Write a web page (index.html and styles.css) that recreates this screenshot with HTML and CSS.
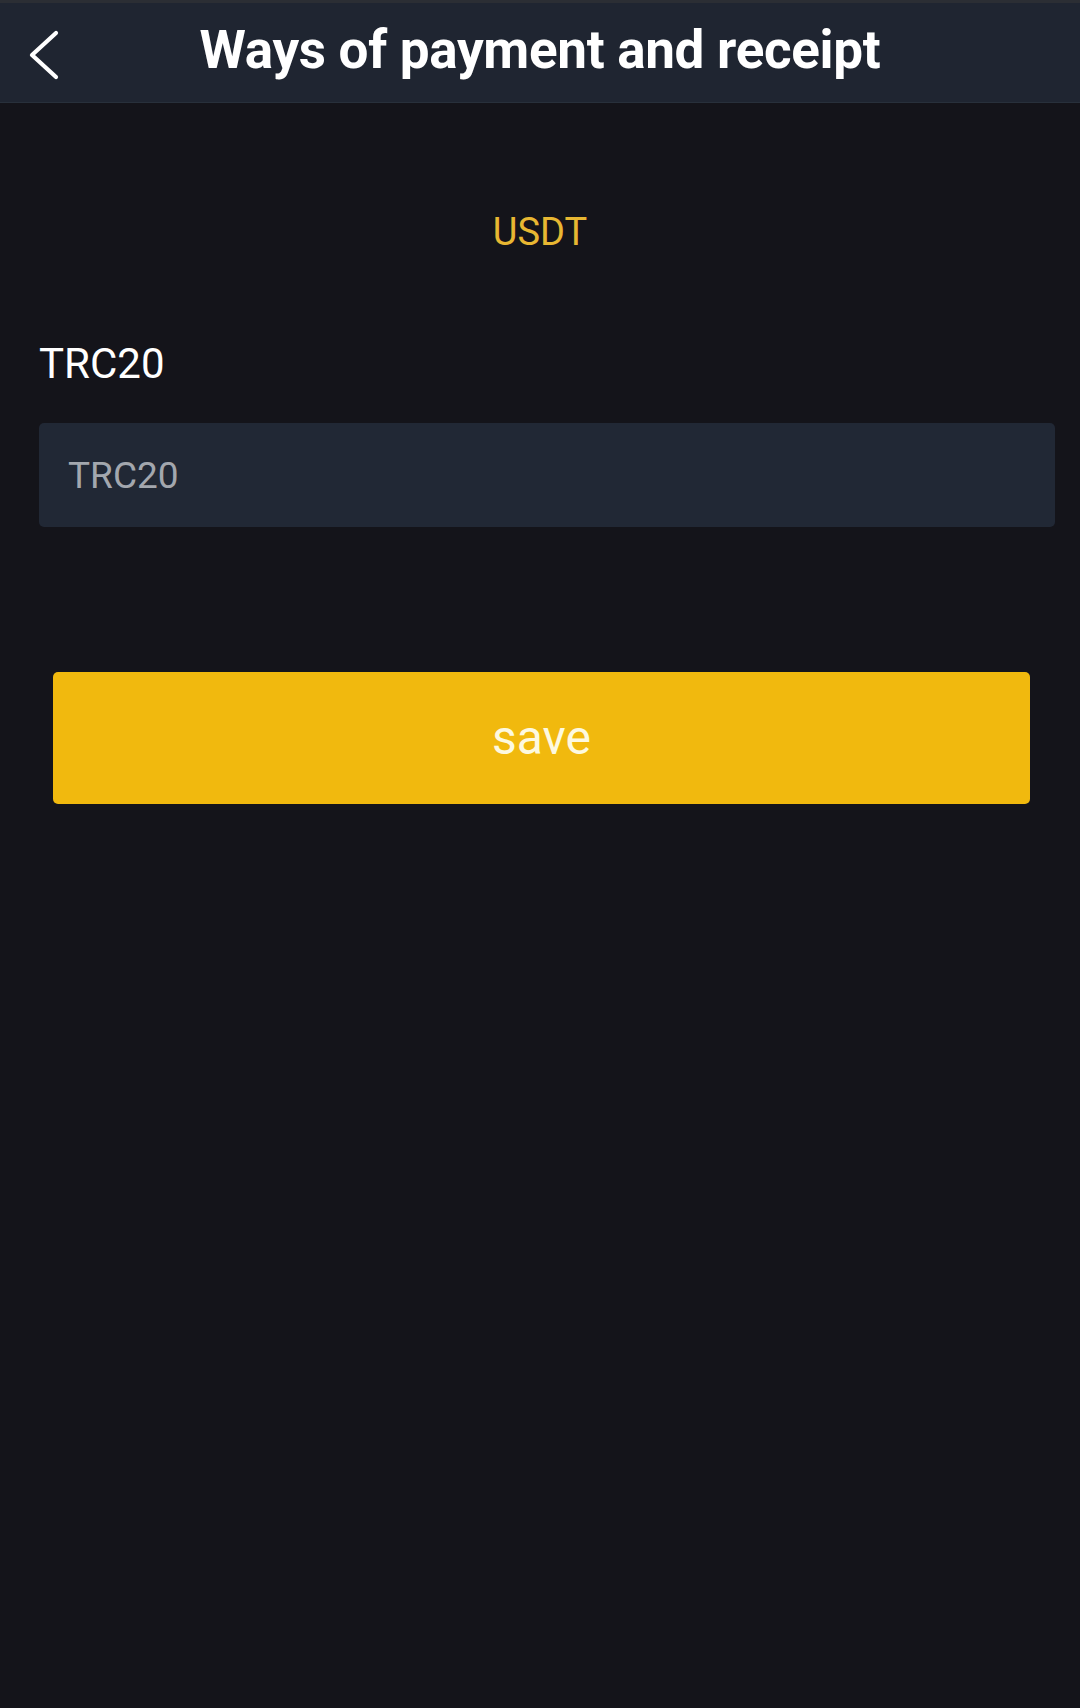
FILE: index.html
```html
<!DOCTYPE html>
<html lang="en">
<head>
<meta charset="utf-8">
<title>Ways of payment and receipt</title>
<link rel="stylesheet" href="styles.css">
</head>
<body>
<header class="topbar">
  <div class="back">
    <svg width="40" height="56" viewBox="0 0 40 56" aria-hidden="true">
      <polyline points="33,8 9,30 33,52" fill="none" stroke="#ffffff" stroke-width="4.2" stroke-linecap="round" stroke-linejoin="round"/>
    </svg>
  </div>
  <h1 class="title">Ways of payment and receipt</h1>
  <div class="spacer"></div>
</header>
<main class="content">
  <div class="coin">USDT</div>
  <div class="field-label">TRC20</div>
  <div class="field">
    <input class="field-input" type="text" placeholder="TRC20">
  </div>
  <button class="save-btn" type="button">save</button>
</main>
</body>
</html>
```

FILE: styles.css
```css
html, body {
  margin: 0;
  padding: 0;
}
body {
  background: #14141a;
  font-family: Roboto, "Noto Sans", "Liberation Sans", sans-serif;
  min-height: 1708px;
}
.topbar {
  display: grid;
  grid-template-columns: 1fr auto 1fr;
  align-items: center;
  height: 99px;
  background: #1f2531;
  border-top: 3px solid #2b2e34;
  border-bottom: 1px solid #28303b;
}
.back {
  display: flex;
  align-items: center;
  padding-left: 23px;
  height: 56px;
}
.back svg {
  display: block;
}
.title {
  margin: 0;
  color: #ffffff;
  font-size: 53px;
  font-weight: 700;
  line-height: 60px;
  letter-spacing: -0.3px;
  white-space: nowrap;
  padding-bottom: 6px;
}
.content {
  padding: 0 25px 0 39px;
}
.coin {
  margin-top: 106px;
  text-align: center;
  color: #e8b732;
  font-size: 38px;
  line-height: 46px;
  padding-right: 14px;
}
.field-label {
  margin-top: 84px;
  color: #ffffff;
  font-size: 42px;
  line-height: 50px;
}
.field {
  margin-top: 34px;
  height: 104px;
  background: #212835;
  border-radius: 5px;
  display: flex;
  align-items: center;
}
.field-input {
  width: 100%;
  height: 100%;
  box-sizing: border-box;
  border: 0;
  outline: 0;
  background: transparent;
  padding: 0 0 0 29px;
  color: #ffffff;
  font-family: Roboto, "Noto Sans", "Liberation Sans", sans-serif;
  font-size: 37px;
}
.field-input::placeholder {
  color: #a3a7ae;
  opacity: 1;
}
.save-btn {
  display: block;
  box-sizing: border-box;
  width: 977px;
  height: 132px;
  margin: 145px 0 0 14px;
  border: 0;
  border-radius: 5px;
  background: #f1b90e;
  color: #fdf9e0;
  font-family: Roboto, "Noto Sans", "Liberation Sans", sans-serif;
  font-size: 48px;
  line-height: 132px;
  padding: 0;
  text-align: center;
}
```
